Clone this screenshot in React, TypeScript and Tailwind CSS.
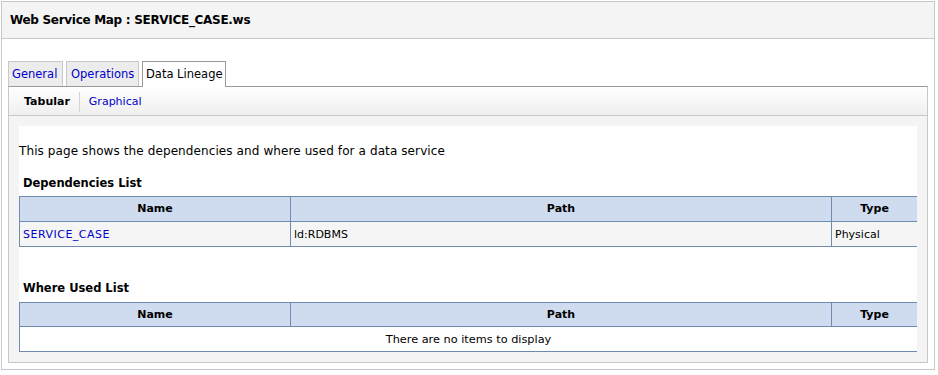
import React from "react";

const cols = "grid grid-cols-[272px_541px_85px]";

function HeaderRow({ h }: { h: string }) {
  return (
    <div className={`${cols} ${h} border-t border-b border-[#6f8cae] bg-[#cfdcef] font-bold text-[11px] text-black`}>
      <div className="flex items-center justify-center pt-px border-l border-r border-[#6f8cae]">Name</div>
      <div className="flex items-center justify-center pt-px border-r border-[#6f8cae]">Path</div>
      <div className="flex items-center justify-center pt-px">Type</div>
    </div>
  );
}

export default function App() {
  return (
    <div className="w-[938px] h-[375px] bg-white pl-[1px] pt-[1px] font-['DejaVu_Sans',sans-serif] text-black">
      <div className="w-[934px] h-[369px] border border-[#c8c8c8] flex flex-col">
        <div className="h-[37px] shrink-0 bg-[#f4f4f4] border-b border-[#c8c8c8] flex items-center pl-[8px] text-[12px] font-bold tracking-[-0.3px]">
          Web Service Map : SERVICE_CASE.ws
        </div>

        <div className="mt-[22px] ml-[6px] flex items-start gap-[3px] text-[11.5px]">
          <div className="w-[55px] h-[25px] border border-b-0 border-[#c8c8c8] bg-[#ececec] flex items-center pl-[3px] pt-[2px] text-[#0000cc]">
            General
          </div>
          <div className="w-[73px] h-[25px] border border-b-0 border-[#c8c8c8] bg-[#ececec] flex items-center pl-[4px] pt-[2px] text-[#0000cc]">
            Operations
          </div>
          <div className="relative z-10 -mb-px w-[84px] h-[26px] border border-b-0 border-[#999] bg-white flex items-center pl-[3px] pt-px">
            Data Lineage
          </div>
        </div>

        <div className="ml-[6px] w-[920px] border border-t-[#999] border-x-[#c8c8c8] border-b-[#c8c8c8] flex flex-col">
          <div className="h-[29px] border-b border-[#c8c8c8] bg-gradient-to-b from-white to-[#efefef] flex items-center pl-[15px] pt-[2px] text-[11px]">
            <span className="font-bold">Tabular</span>
            <span className="mx-[9px] w-px h-[20px] bg-[#d4d4d4]" />
            <span className="text-[#0000cc]">Graphical</span>
          </div>

          <div className="bg-[#f4f4f4] p-[10px]">
            <div className="bg-white w-[898px]">
              <div className="pt-[17px] h-[32px] leading-[16px] text-[12px] tracking-[0.1px]">
                This page shows the dependencies and where used for a data service
              </div>
              <div className="mt-[16px] h-[16px] leading-[16px] pt-px pl-[4px] text-[11.5px] font-bold">
                Dependencies List
              </div>

              <div className="mt-[6px]">
                <HeaderRow h="h-[26px]" />
                <div className={`${cols} h-[25px] border-b border-[#6f8cae] bg-[#f5f5f5] text-[11px]`}>
                  <div className="flex items-center pl-[3px] pt-[3px] border-l border-r border-[#6f8cae] text-[#0000cc] tracking-[0.5px]">
                    SERVICE_CASE
                  </div>
                  <div className="flex items-center pl-[3px] pt-[3px] border-r border-[#6f8cae]">ld:RDBMS</div>
                  <div className="flex items-center pl-[3px] pt-[3px]">Physical</div>
                </div>
              </div>

              <div className="mt-[32px] h-[16px] leading-[16px] pt-px pl-[4px] text-[11.5px] font-bold">
                Where Used List
              </div>

              <div className="mt-[7px]">
                <HeaderRow h="h-[25px]" />
                <div className="h-[25px] border-b border-l border-[#6f8cae] bg-white flex items-center justify-center pt-[2px] text-[11.3px]">
                  There are no items to display
                </div>
              </div>
            </div>
          </div>
        </div>
      </div>
    </div>
  );
}
